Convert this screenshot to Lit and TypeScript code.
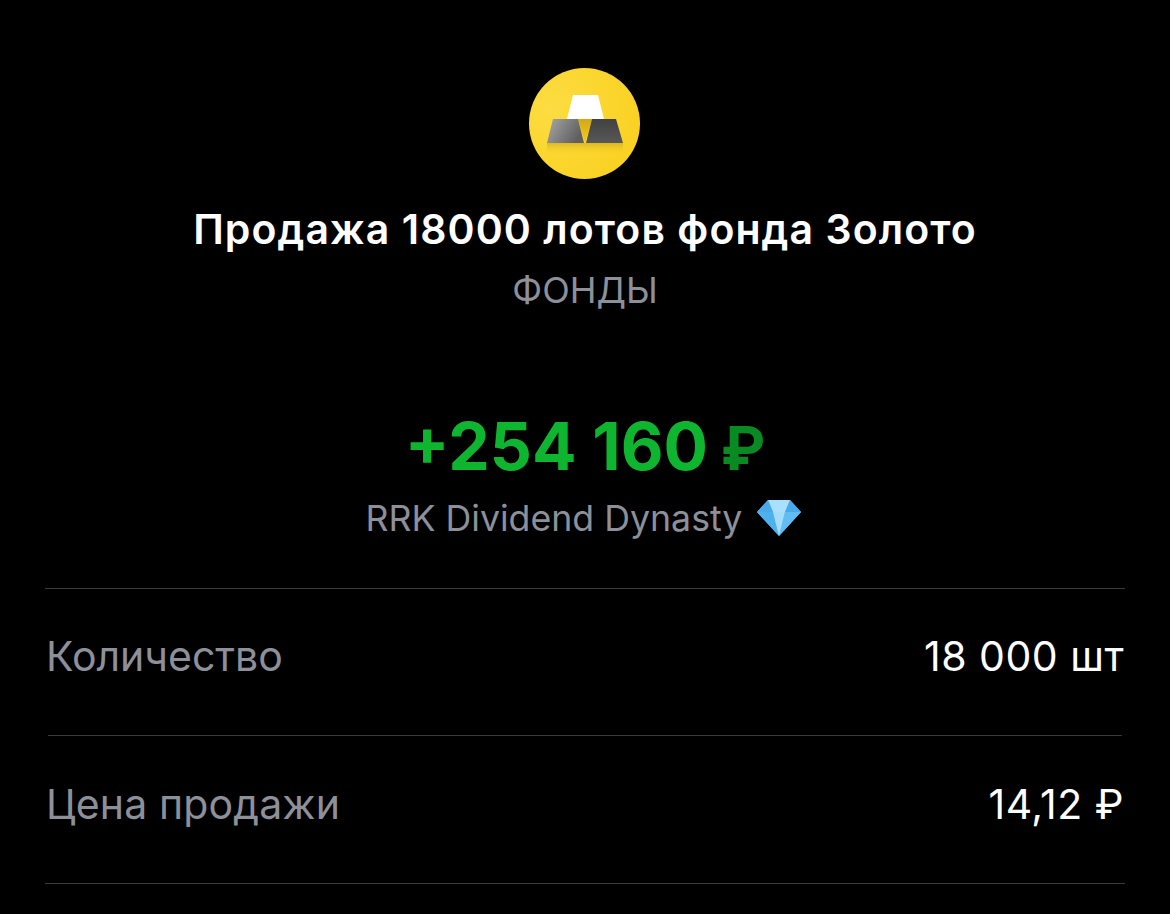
import { LitElement, html, css, svg } from "lit";
import { customElement } from "lit/decorators.js";

const goldIcon = html`<svg class="logo" viewBox="0 0 111 111" width="111" height="111" aria-hidden="true">
  <defs>
    <radialGradient id="bg" cx="0.2" cy="0.35" r="0.95">
      <stop offset="0" stop-color="#fcdc42"/><stop offset="0.5" stop-color="#fbd62e"/><stop offset="1" stop-color="#f9d01f"/>
    </radialGradient>
    <linearGradient id="left" x1="0" x2="1" y1="0" y2="0.4">
      <stop offset="0" stop-color="#a8a8a8"/><stop offset="1" stop-color="#5f5f5f"/>
    </linearGradient>
    <linearGradient id="right" x1="0" x2="0" y1="0" y2="1">
      <stop offset="0" stop-color="#414141"/><stop offset="1" stop-color="#585858"/>
    </linearGradient>
    <linearGradient id="shade" x1="0" x2="0" y1="0" y2="1">
      <stop offset="0" stop-color="#c09a14" stop-opacity="0.5"/><stop offset="1" stop-color="#f9d227" stop-opacity="0"/>
    </linearGradient>
    <linearGradient id="gap" x1="0" x2="0" y1="0" y2="1">
      <stop offset="0" stop-color="#d2a816"/><stop offset="1" stop-color="#f6ca1e"/>
    </linearGradient>
  </defs>
  <circle cx="55.5" cy="55.5" r="55.5" fill="url(#bg)"/>
  <rect x="18" y="75" width="76" height="12" fill="url(#shade)"/>
  <polygon points="49,51 63,51 56,75" fill="url(#gap)"/>
  <polygon points="44,27 69,27 75,51 38,51" fill="#ffffff"/>
  <polygon points="24,51 49,51 55,75 18,75" fill="url(#left)"/>
  <polygon points="63,51 87,51 94,75 57,75" fill="url(#right)"/>
</svg>`;

const gem = svg`<svg class="gem" viewBox="0 0 46 38" width="46" height="38" aria-hidden="true">
  <polygon points="12,1 34,1 45,13 23,37 1,13" fill="#6cc4f5"/>
  <polygon points="12,1 34,1 29,13 17,13" fill="#a9e0fb"/>
  <polygon points="12,1 17,13 1,13" fill="#4aa9e8"/>
  <polygon points="34,1 45,13 29,13" fill="#4aa9e8"/>
  <polygon points="1,13 17,13 23,37" fill="#4fb0ee"/>
  <polygon points="17,13 29,13 23,37" fill="#a5dcfa"/>
  <polygon points="29,13 45,13 23,37" fill="#62bdf3"/>
</svg>`;

@customElement("app-root")
export class AppRoot extends LitElement {
  static styles = css`
    :host {
      display: block;
      height: 914px;
      overflow: hidden;
      background: #000;
      font-family: Inter, "Liberation Sans", sans-serif;
      color: #fff;
    }
    .head {
      display: flex;
      flex-direction: column;
      align-items: center;
      padding-top: 68px;
    }
    .logo { display: block; margin-right: 1px; }
    .title {
      margin-top: 24px;
      font-size: 41px;
      line-height: 52px;
      font-weight: 600;
      letter-spacing: 1.08px;
      white-space: nowrap;
    }
    .cat {
      margin-top: 15px;
      font-size: 36px;
      line-height: 40px;
      color: #8d9099;
    }
    .amount {
      margin-top: 98px;
      font-size: 66px;
      line-height: 76px;
      font-weight: 700;
      color: #0eb52f;
      white-space: nowrap;
    }
    .rub {
      color: #0a8a22;
      font-size: 60px;
      line-height: 0;
      font-weight: 700;
      margin-left: -3px;
    }
    .acct {
      margin-top: 12px;
      margin-right: 2px;
      display: flex;
      align-items: center;
      gap: 14px;
      font-size: 35.7px;
      line-height: 44px;
      color: #8d9099;
    }
    .gem { display: block; }
    .list {
      margin-top: 48px;
      padding: 0 45px;
    }
    .rule { height: 1px; background: #3a3a3c; }
    .rule.inset { margin: 0 3px; }
    .row {
      display: flex;
      justify-content: space-between;
      align-items: center;
      height: 134px;
      padding: 0 1px 12px;
      font-size: 41px;
    }
    .row.tall { height: 135px; }
    .label { color: #8d9099; }
    .label.wide { letter-spacing: 0.15px; }
    .value { color: #fff; letter-spacing: 0.5px; }
  `;

  render() {
    return html`
      <div class="head">
        ${goldIcon}
        <div class="title">Продажа 18000 лотов фонда Золото</div>
        <div class="cat">ФОНДЫ</div>
        <div class="amount">+254 160 <span class="rub">₽</span></div>
        <div class="acct"><span>RRK Dividend Dynasty</span>${gem}</div>
      </div>
      <div class="list">
        <div class="rule"></div>
        <div class="row"><span class="label">Количество</span><span class="value">18 000 шт</span></div>
        <div class="rule inset"></div>
        <div class="row tall"><span class="label wide">Цена продажи</span><span class="value">14,12 ₽</span></div>
        <div class="rule"></div>
      </div>
    `;
  }
}
